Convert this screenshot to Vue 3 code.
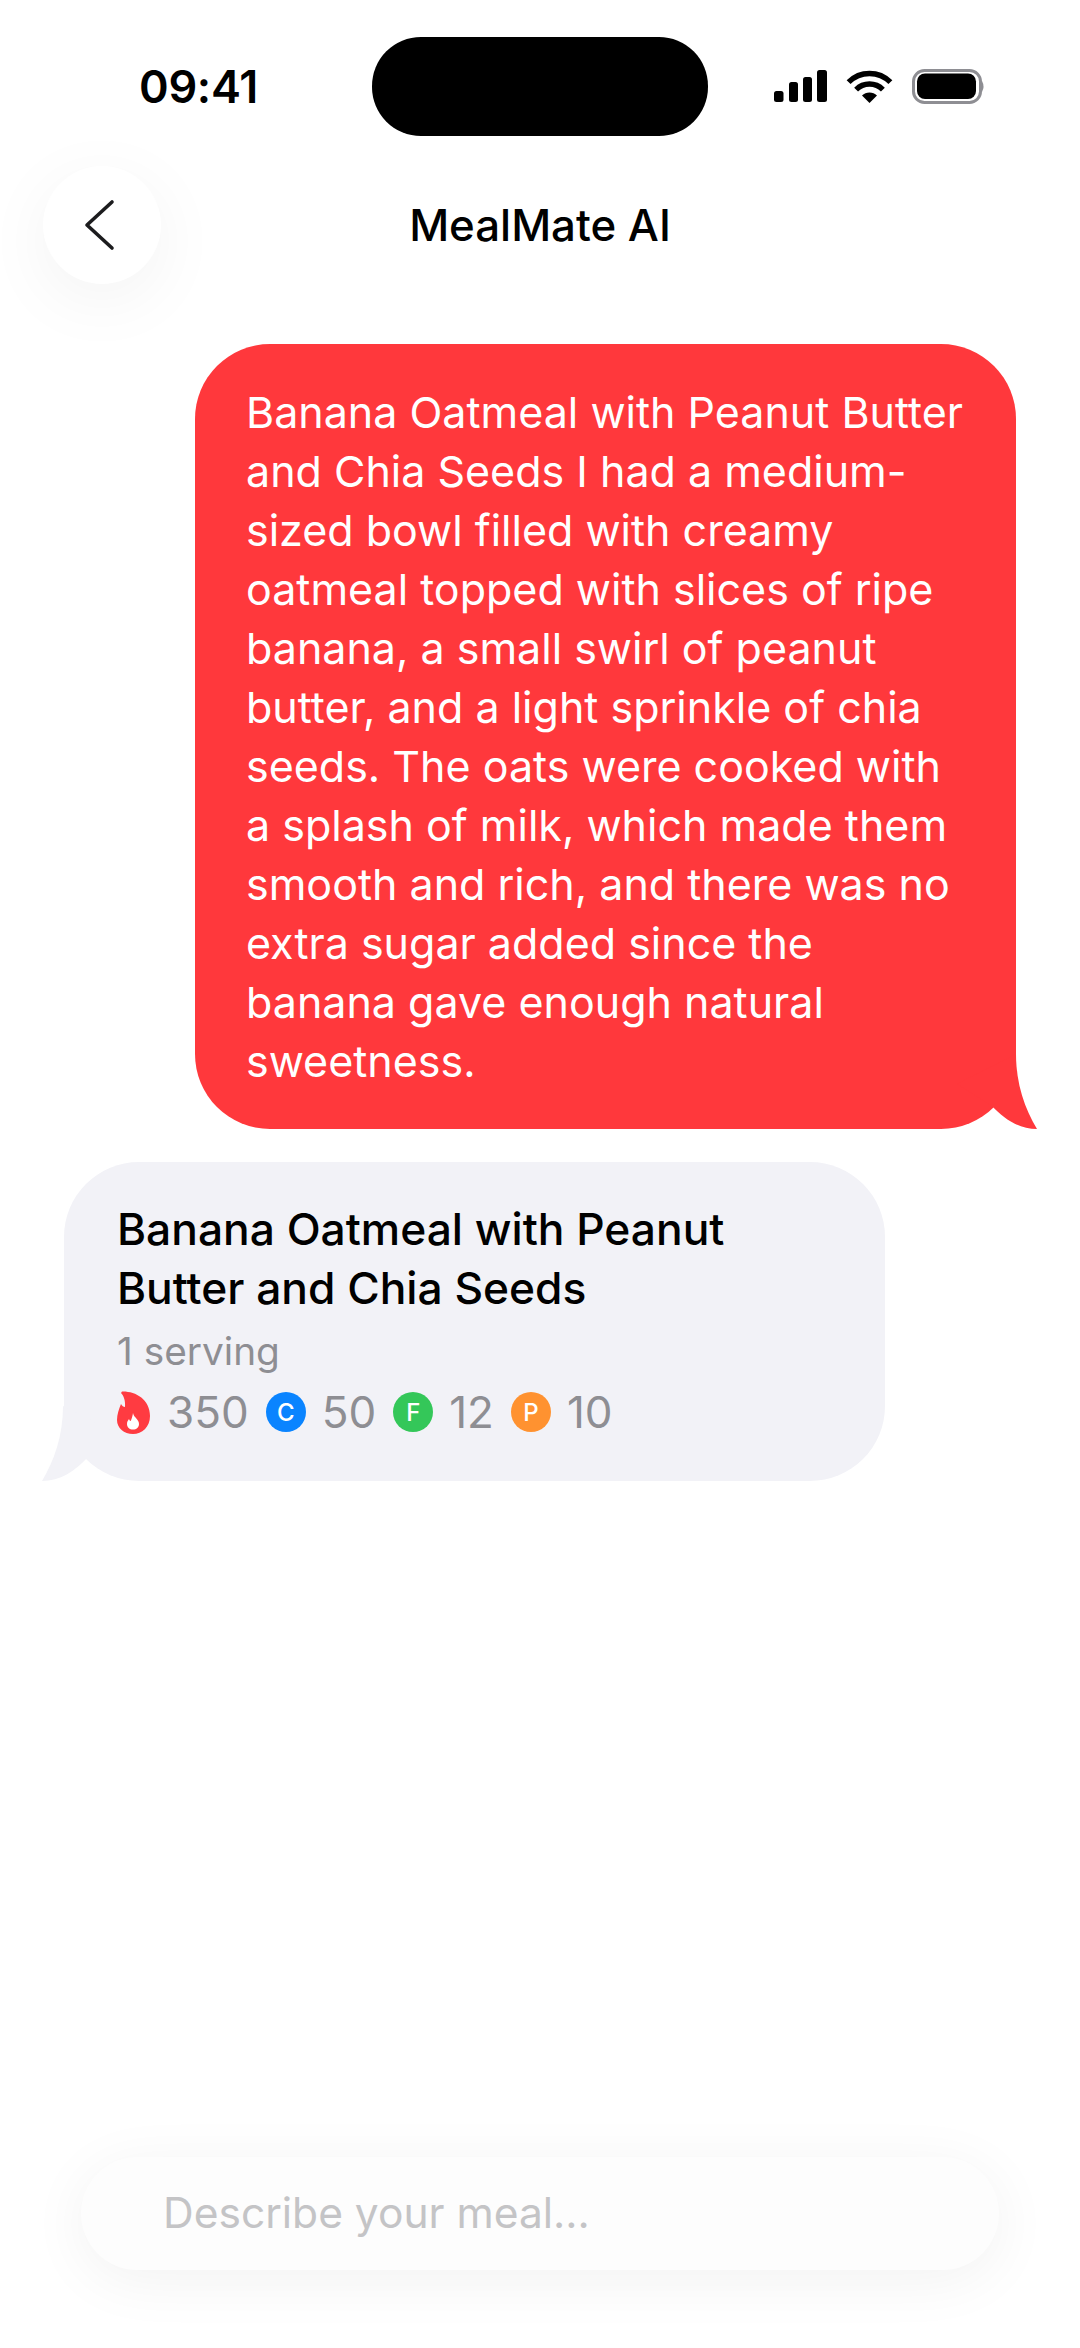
<script setup>
const messageLines = [
  'Banana Oatmeal with Peanut Butter',
  'and Chia Seeds I had a medium-',
  'sized bowl filled with creamy',
  'oatmeal topped with slices of ripe',
  'banana, a small swirl of peanut',
  'butter, and a light sprinkle of chia',
  'seeds. The oats were cooked with',
  'a splash of milk, which made them',
  'smooth and rich, and there was no',
  'extra sugar added since the',
  'banana gave enough natural',
  'sweetness.'
];

const macros = [
  { letter: 'C', value: 50, color: '#0a84ff' },
  { letter: 'F', value: 12, color: '#34c759' },
  { letter: 'P', value: 10, color: '#ff9230' }
];
</script>

<template>
  <div class="screen">
    <div class="status">
      <span class="time">09:41</span>
      <div class="island"></div>
      <svg class="status-icons" width="211" height="35" viewBox="0 0 211 35">
        <rect x="0" y="22" width="9.5" height="11" rx="2.5" />
        <rect x="15" y="13" width="9" height="20" rx="2.5" />
        <rect x="29" y="8" width="9" height="25" rx="2.5" />
        <rect x="43" y="1" width="10" height="32" rx="2.5" />
        <path d="M74.6 13.1A29.5 29.5 0 0 1 116.4 13.1" fill="none" stroke="#000" stroke-width="5.5" />
        <path d="M82.1 20.6A19 19 0 0 1 108.9 20.6" fill="none" stroke="#000" stroke-width="5.5" />
        <path d="M95.5 34L88 26.5A10.6 10.6 0 0 1 103 26.5Z" />
        <rect x="139.5" y="1.5" width="67" height="32" rx="11" fill="none" stroke="#8e8e93" stroke-width="3" />
        <rect x="143" y="4.5" width="59" height="25.5" rx="8" />
        <path d="M208 12Q211 17.5 208 23Z" fill="#8e8e93" />
      </svg>
    </div>

    <header class="top">
      <button class="back">
        <svg width="32" height="52" viewBox="0 0 32 52">
          <path d="M28 3L3 26L28 49" fill="none" stroke="#1c1c1e" stroke-width="3.6" stroke-linecap="round" stroke-linejoin="round" />
        </svg>
      </button>
      <h1 class="title">MealMate AI</h1>
    </header>

    <main class="chat">
      <div class="bubble mine">
        <div v-for="line in messageLines" :key="line">{{ line }}</div>
        <svg class="tail" width="80" height="75" viewBox="0 0 80 75">
          <path d="M59 0C59 30 68 55 80 75C62 75 47 65 35 52L0 30Z" />
        </svg>
      </div>

      <div class="bubble reply">
        <div class="meal-name">Banana Oatmeal with Peanut<br />Butter and Chia Seeds</div>
        <div class="serving">1 serving</div>
        <div class="stats">
          <svg class="flame" width="33" height="43" viewBox="0 0 33 43">
            <path d="M5 0.5C18 0 33 8 33 25C33 36 25 43 16 43C7 43 0 37 0 29C0 23 2 18 4 13C5 15 6.500 16 8 16C8.500 10 7 5 4 2Z" fill="#ff3b41" />
            <path d="M16 22C17 27 22 28 22 33C22 36.500 19.500 38.500 16 38.500C12.500 38.500 10 36.500 10 33C10 31 10.800 29.500 12 28C12.400 29.200 13 30 13.800 30C14.800 27.500 15.500 25 16 22Z" fill="#fff" />
          </svg>
          <span class="num first">350</span>
          <template v-for="m in macros" :key="m.letter">
            <span class="macro" :style="{ background: m.color }">{{ m.letter }}</span>
            <span class="num">{{ m.value }}</span>
          </template>
        </div>
        <svg class="tail" width="80" height="75" viewBox="0 0 80 75">
          <path d="M59 0C59 30 68 55 80 75C62 75 47 65 35 52L0 30Z" />
        </svg>
      </div>
    </main>

    <footer class="composer">
      <div class="field">Describe your meal...</div>
    </footer>
  </div>
</template>

<style>
html, body {
  margin: 0;
  background: #fff;
}
</style>

<style scoped>
.screen {
  width: 1080px;
  height: 2348px;
  display: flex;
  flex-direction: column;
  overflow: hidden;
  background: #fff;
  font-family: Inter, "Liberation Sans", sans-serif;
  color: #000;
}

.status {
  display: grid;
  grid-template-columns: 372px 336px 1fr;
  align-items: center;
  height: 99px;
  margin-top: 37px;
}
.time {
  padding-left: 139px;
  font-size: 45px;
  font-weight: 600;
  letter-spacing: -0.3px;
  line-height: 1;
}
.island {
  height: 99px;
  border-radius: 49px;
  background: #000;
}
.status-icons {
  margin-left: 66px;
}

.top {
  display: grid;
  grid-template-columns: 1fr auto 1fr;
  align-items: center;
  padding: 0 43px;
  margin-top: 30px;
}
.back {
  width: 118px;
  height: 118px;
  padding: 0 4px 0 0;
  border: 0;
  border-radius: 50%;
  background: #fff;
  box-shadow: 0 16px 70px rgba(0, 0, 0, 0.05);
  display: flex;
  align-items: center;
  justify-content: center;
}
.title {
  margin: 2px 0 0;
  font-size: 43.8px;
  font-weight: 550;
  line-height: 1;
}

.chat {
  display: flex;
  flex-direction: column;
  gap: 33px;
  margin-top: 60px;
  padding: 0 64px;
}
.bubble {
  position: relative;
  box-sizing: border-box;
  width: 821px;
  border-radius: 75px;
}
.tail {
  position: absolute;
  bottom: 0;
}
.mine {
  align-self: flex-end;
  padding: 39px 30px 38px 51px;
  background: #ff383c;
  color: #fff;
  font-size: 43px;
  line-height: 59px;
  white-space: nowrap;
}
.mine .tail {
  right: -21px;
  fill: #ff383c;
}
.reply {
  align-self: flex-start;
  padding: 38px 40px 0 53px;
  height: 319px;
  background: #f2f2f7;
}
.reply .tail {
  left: -22px;
  transform: scaleX(-1);
  fill: #f2f2f7;
}
.meal-name {
  font-size: 44.3px;
  font-weight: 550;
  line-height: 59px;
}
.serving {
  margin-top: 8px;
  font-size: 38.8px;
  line-height: 50px;
  color: #8e8e93;
}
.stats {
  display: flex;
  align-items: center;
  height: 48px;
  margin-top: 12px;
  color: #8e8e93;
}
.flame {
  flex: none;
}
.num {
  font-size: 44px;
  margin: 0 17px 0 16px;
}
.num.first {
  margin: 0 17px;
}
.macro {
  flex: none;
  width: 40px;
  height: 40px;
  border-radius: 50%;
  display: flex;
  align-items: center;
  justify-content: center;
  color: #fff;
  font-size: 24px;
  font-weight: 500;
}

.composer {
  margin-top: auto;
  padding: 0 81px 78px;
}
.field {
  height: 111px;
  padding: 0 0 2px 82px;
  border-radius: 57px;
  background: #fdfdfd;
  box-shadow: 0 10px 60px rgba(0, 0, 0, 0.055);
  display: flex;
  align-items: center;
  color: #c4c4c6;
  font-size: 42.5px;
}
</style>
